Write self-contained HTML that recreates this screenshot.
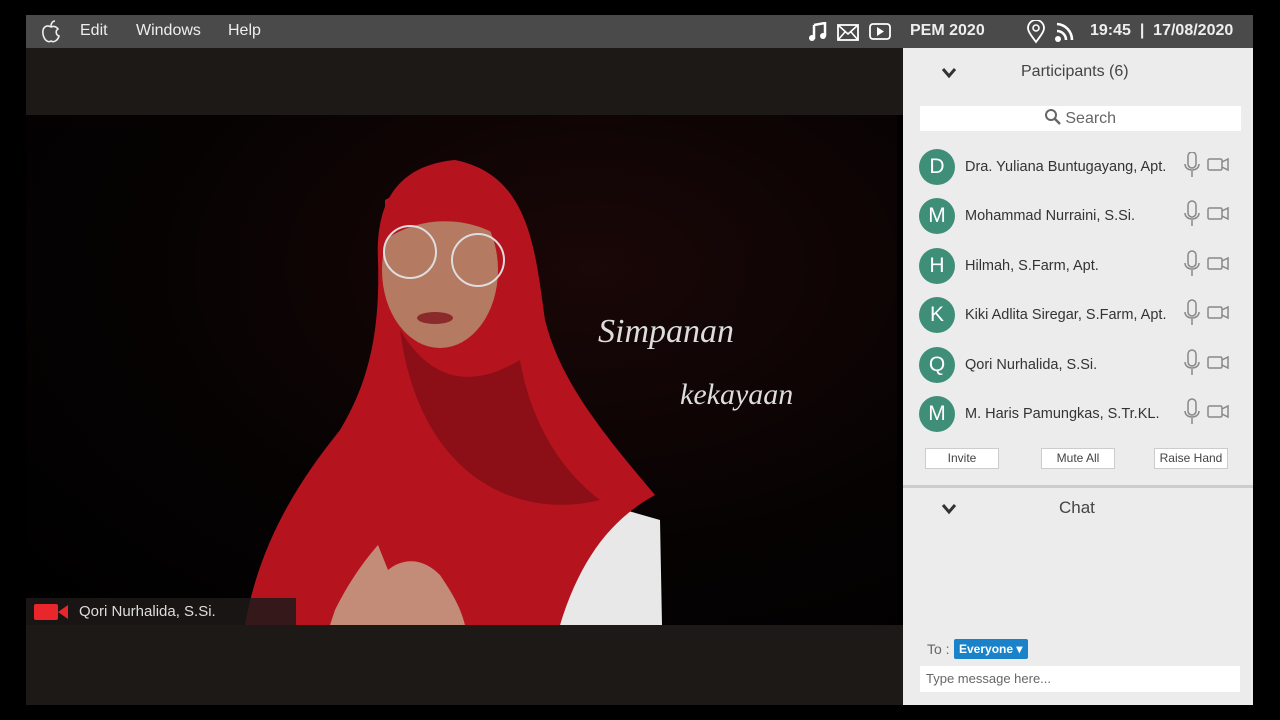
<!DOCTYPE html>
<html><head><meta charset="utf-8"><style>
*{margin:0;padding:0;box-sizing:border-box}
body{width:1280px;height:720px;background:#000;position:relative;overflow:hidden;font-family:"Liberation Sans",sans-serif}
.abs{position:absolute}
.menu{left:26px;top:15px;width:1227px;height:33px;background:#4a4a4a;color:#eee;font-size:16px}
.menu span{position:absolute;top:7px}
.panel{left:903px;top:48px;width:350px;height:657px;background:#ececec;color:#333}
.row{position:absolute;left:16px;height:36px;width:330px}
.av{position:absolute;left:0;top:0;width:36px;height:36px;border-radius:50%;background:#3f8f78;color:#fff;font-size:21px;text-align:center;line-height:36px}
.nm{position:absolute;left:46px;top:10px;font-size:14.5px;color:#333;white-space:nowrap}
.btn{position:absolute;top:400px;height:21px;background:#fff;border:1px solid #ccc;font-size:12px;text-align:center;line-height:19px;color:#444}
</style></head><body>
<div class="abs menu">
<svg class="abs" style="left:14px;top:5px" width="22" height="24" viewBox="0 0 22 24"><path d="M11 7 C6 4 2 8 3 14 C4 20 8 23 11 21 C14 23 18 20 19 16 C16 15 15 11 18 9 C16 6 13 6 11 7Z" fill="none" stroke="#eee" stroke-width="1.6"/><path d="M11 6 C11 3 13 1 15 1" fill="none" stroke="#eee" stroke-width="1.6"/></svg>
<span style="left:54px">Edit</span><span style="left:110px">Windows</span><span style="left:202px">Help</span>
<svg class="abs" style="left:782px;top:7px" width="20" height="20" viewBox="0 0 20 20"><path d="M6 3 L17 1 L17 14 M6 3 L6 17" stroke="#fff" stroke-width="2.5" fill="none"/><circle cx="4" cy="16" r="3" fill="#fff"/><circle cx="15" cy="14" r="3" fill="#fff"/></svg>
<svg class="abs" style="left:811px;top:9px" width="22" height="18" viewBox="0 0 22 18"><rect x="1" y="1" width="20" height="15" fill="none" stroke="#fff" stroke-width="1.8"/><path d="M1 1 L11 10 L21 1 M1 16 L8 8 M21 16 L14 8" stroke="#fff" stroke-width="1.6" fill="none"/></svg>
<svg class="abs" style="left:843px;top:8px" width="22" height="18" viewBox="0 0 22 18"><rect x="1" y="1" width="20" height="15" rx="3" fill="none" stroke="#fff" stroke-width="1.8"/><path d="M8 4 L15 8.5 L8 13Z" fill="#fff"/></svg>
<span style="left:884px;font-weight:bold">PEM 2020</span>
<svg class="abs" style="left:1000px;top:5px" width="20" height="24" viewBox="0 0 20 24"><path d="M10 22 C4 14 2 11 2 8 A8 8 0 0 1 18 8 C18 11 16 14 10 22Z" fill="none" stroke="#fff" stroke-width="1.8"/><circle cx="10" cy="8" r="3" fill="none" stroke="#fff" stroke-width="1.6"/></svg>
<svg class="abs" style="left:1028px;top:6px" width="20" height="22" viewBox="0 0 20 22"><circle cx="4" cy="18" r="3" fill="#fff"/><path d="M3 10 A9 9 0 0 1 12 19 M3 3 A16 16 0 0 1 18 19" stroke="#fff" stroke-width="2.6" fill="none"/></svg>
<span style="left:1064px;font-weight:bold">19:45 &nbsp;| &nbsp;17/08/2020</span>
</div>
<div class="abs" style="left:26px;top:48px;width:877px;height:67px;background:#1c1917"></div>
<div class="abs" style="left:26px;top:115px;width:871px;height:510px;background:radial-gradient(ellipse at 65% 30%,#1a0707,#050202 60%,#000)"></div>
<div class="abs" style="left:26px;top:625px;width:877px;height:80px;background:#1c1917"></div>
<svg class="abs" style="left:26px;top:115px" width="871" height="510" viewBox="26 115 871 510">
<path d="M590 500 L660 520 L662 625 L560 625Z" fill="#e8e8e8"/>
<path d="M455 160 C400 165 375 200 378 260 C380 330 370 380 340 430 C300 480 260 540 245 625 L560 625 C580 560 610 520 655 495 C600 430 560 380 545 320 C535 250 530 175 455 160Z" fill="#b5141f"/>
<path d="M400 330 C430 380 470 390 520 360 C530 420 560 470 600 500 C520 520 420 480 400 330Z" fill="#8c0e16"/>
<ellipse cx="440" cy="270" rx="58" ry="78" fill="#b47a62"/>
<path d="M385 200 C420 180 480 180 505 205 L505 240 C470 215 420 215 385 240Z" fill="#b5141f"/>
<circle cx="410" cy="252" r="26" fill="none" stroke="#ddd" stroke-width="2"/>
<circle cx="478" cy="260" r="26" fill="none" stroke="#ddd" stroke-width="2"/>
<ellipse cx="435" cy="318" rx="18" ry="6" fill="#8a2a2a"/>
<path d="M335 610 C350 580 365 560 378 545 L388 570 C400 560 420 555 440 575 C450 590 460 605 465 625 L330 625Z" fill="#c28c78"/>
<text x="598" y="342" fill="#ddd" font-family="Liberation Serif,serif" font-style="italic" font-size="34">Simpanan</text>
<text x="680" y="404" fill="#ddd" font-family="Liberation Serif,serif" font-style="italic" font-size="30">kekayaan</text>
</svg>
<div class="abs" style="left:26px;top:598px;width:270px;height:28px;background:rgba(30,25,25,.85)"></div>
<svg class="abs" style="left:34px;top:603px" width="36" height="18" viewBox="0 0 36 18"><rect x="0" y="1" width="24" height="16" rx="2" fill="#e8262b"/><path d="M24 9 L34 2 L34 16Z" fill="#e8262b"/></svg>
<div class="abs" style="left:79px;top:603px;color:#ddd;font-size:15px">Qori Nurhalida, S.Si.</div>
<div class="abs panel">
<svg class="abs" style="left:38px;top:19px" width="16" height="12" viewBox="0 0 16 12"><path d="M2 2 L8 9 L14 2" stroke="#333" stroke-width="3" fill="none"/></svg>
<div class="abs" style="left:118px;top:15px;font-size:16px;color:#444">Participants (6)</div>
<div class="abs" style="left:17px;top:58px;width:321px;height:25px;background:#fff;text-align:center;font-size:16px;color:#666;line-height:25px"><svg width="16" height="16" viewBox="0 0 16 16" style="vertical-align:-2px"><circle cx="6" cy="6" r="5" fill="none" stroke="#666" stroke-width="2"/><path d="M10 10 L15 15" stroke="#666" stroke-width="2.4"/></svg> Search</div>
<div class="row" style="top:101px"><div class="av">D</div><div class="nm">Dra. Yuliana Buntugayang, Apt.</div></div>
<div class="row" style="top:150px"><div class="av">M</div><div class="nm">Mohammad Nurraini, S.Si.</div></div>
<div class="row" style="top:200px"><div class="av">H</div><div class="nm">Hilmah, S.Farm, Apt.</div></div>
<div class="row" style="top:249px"><div class="av">K</div><div class="nm">Kiki Adlita Siregar, S.Farm, Apt.</div></div>
<div class="row" style="top:299px"><div class="av">Q</div><div class="nm">Qori Nurhalida, S.Si.</div></div>
<div class="row" style="top:348px"><div class="av">M</div><div class="nm">M. Haris Pamungkas, S.Tr.KL.</div></div>
<svg class="abs" style="left:280px;top:104px" width="50" height="280" viewBox="0 0 50 280">
<defs><g id="ic"><rect x="5" y="0" width="8" height="16" rx="4" fill="none" stroke="#888" stroke-width="1.5"/><path d="M2 12 C2 20 16 20 16 12 M9 19 L9 25" stroke="#888" stroke-width="1.5" fill="none"/><rect x="25" y="7" width="14" height="11" rx="1.5" fill="none" stroke="#888" stroke-width="1.5"/><path d="M39 10 L45 7 L45 18 L39 15" fill="none" stroke="#888" stroke-width="1.5"/></g></defs>
<use href="#ic" y="0"/><use href="#ic" y="49"/><use href="#ic" y="99"/><use href="#ic" y="148"/><use href="#ic" y="198"/><use href="#ic" y="247"/>
</svg>
<div class="btn" style="left:22px;width:74px">Invite</div>
<div class="btn" style="left:138px;width:74px">Mute All</div>
<div class="btn" style="left:251px;width:74px">Raise Hand</div>
<div class="abs" style="left:0;top:437px;width:350px;height:3px;background:#ccc"></div>
<svg class="abs" style="left:38px;top:455px" width="16" height="12" viewBox="0 0 16 12"><path d="M2 2 L8 9 L14 2" stroke="#333" stroke-width="3" fill="none"/></svg>
<div class="abs" style="left:156px;top:450px;font-size:17px;color:#444">Chat</div>
<div class="abs" style="left:24px;top:593px;font-size:14px;color:#666">To :</div>
<div class="abs" style="left:51px;top:591px;width:74px;height:20px;background:#1a82c8;color:#fff;font-size:12px;font-weight:bold;line-height:20px;padding-left:5px;border-radius:2px">Everyone ▾</div>
<div class="abs" style="left:17px;top:618px;width:320px;height:26px;background:#fff;font-size:13px;color:#666;line-height:26px;padding-left:6px">Type message here...</div>
</div>
</body></html>
